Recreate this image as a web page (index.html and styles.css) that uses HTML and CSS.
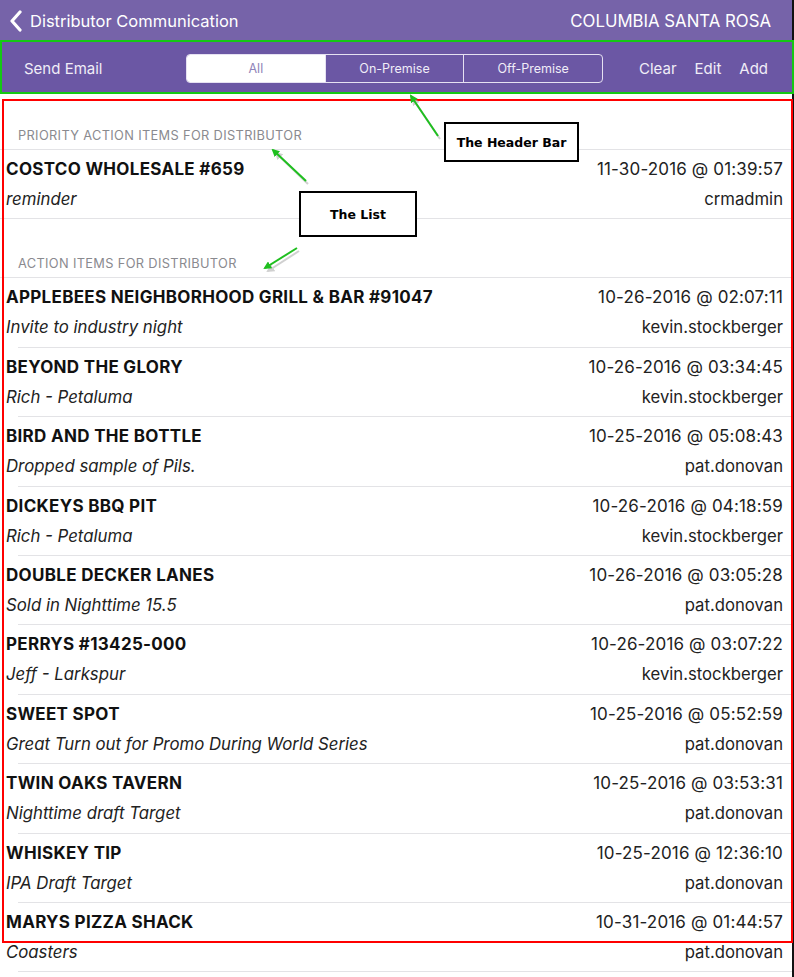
FILE: index.html
```html
<!DOCTYPE html>
<html>
<head>
<meta charset="utf-8">
<link rel="stylesheet" href="styles.css">
</head>
<body>
<div class="app">
  <header class="navbar">
    <div class="nav-left">
      <svg class="chev" width="14" height="22" viewBox="0 0 14 22"><polyline points="11,2 3,11 11,20" fill="none" stroke="#fff" stroke-width="3.2" stroke-linecap="round" stroke-linejoin="round"/></svg>
      <span class="nav-title">Distributor Communication</span>
    </div>
    <span class="nav-right">COLUMBIA SANTA ROSA</span>
  </header>
  <div class="toolbar">
    <span class="tb-btn send">Send Email</span>
    <div class="segmented">
      <span class="seg active">All</span>
      <span class="seg">On-Premise</span>
      <span class="seg">Off-Premise</span>
    </div>
    <div class="tb-actions">
      <span class="tb-btn">Clear</span>
      <span class="tb-btn">Edit</span>
      <span class="tb-btn">Add</span>
    </div>
  </div>
  <main class="list">
    <div class="section-head first">PRIORITY ACTION ITEMS FOR DISTRIBUTOR</div>
    <div class="row last">
      <div class="l"><div class="t">COSTCO WHOLESALE #659</div><div class="s">reminder</div></div>
      <div class="r"><div class="d">11-30-2016 @ 01:39:57</div><div class="u">crmadmin</div></div>
    </div>
    <div class="section-head">ACTION ITEMS FOR DISTRIBUTOR</div>
    <div class="row">
      <div class="l"><div class="t">APPLEBEES NEIGHBORHOOD GRILL &amp; BAR #91047</div><div class="s">Invite to industry night</div></div>
      <div class="r"><div class="d">10-26-2016 @ 02:07:11</div><div class="u">kevin.stockberger</div></div>
    </div>
    <div class="row">
      <div class="l"><div class="t">BEYOND THE GLORY</div><div class="s">Rich - Petaluma</div></div>
      <div class="r"><div class="d">10-26-2016 @ 03:34:45</div><div class="u">kevin.stockberger</div></div>
    </div>
    <div class="row">
      <div class="l"><div class="t">BIRD AND THE BOTTLE</div><div class="s">Dropped sample of Pils.</div></div>
      <div class="r"><div class="d">10-25-2016 @ 05:08:43</div><div class="u">pat.donovan</div></div>
    </div>
    <div class="row">
      <div class="l"><div class="t">DICKEYS BBQ PIT</div><div class="s">Rich - Petaluma</div></div>
      <div class="r"><div class="d">10-26-2016 @ 04:18:59</div><div class="u">kevin.stockberger</div></div>
    </div>
    <div class="row">
      <div class="l"><div class="t">DOUBLE DECKER LANES</div><div class="s">Sold in Nighttime 15.5</div></div>
      <div class="r"><div class="d">10-26-2016 @ 03:05:28</div><div class="u">pat.donovan</div></div>
    </div>
    <div class="row">
      <div class="l"><div class="t">PERRYS #13425-000</div><div class="s">Jeff - Larkspur</div></div>
      <div class="r"><div class="d">10-26-2016 @ 03:07:22</div><div class="u">kevin.stockberger</div></div>
    </div>
    <div class="row">
      <div class="l"><div class="t">SWEET SPOT</div><div class="s">Great Turn out for Promo During World Series</div></div>
      <div class="r"><div class="d">10-25-2016 @ 05:52:59</div><div class="u">pat.donovan</div></div>
    </div>
    <div class="row">
      <div class="l"><div class="t">TWIN OAKS TAVERN</div><div class="s">Nighttime draft Target</div></div>
      <div class="r"><div class="d">10-25-2016 @ 03:53:31</div><div class="u">pat.donovan</div></div>
    </div>
    <div class="row">
      <div class="l"><div class="t">WHISKEY TIP</div><div class="s">IPA Draft Target</div></div>
      <div class="r"><div class="d">10-25-2016 @ 12:36:10</div><div class="u">pat.donovan</div></div>
    </div>
    <div class="row">
      <div class="l"><div class="t">MARYS PIZZA SHACK</div><div class="s">Coasters</div></div>
      <div class="r"><div class="d">10-31-2016 @ 01:44:57</div><div class="u">pat.donovan</div></div>
    </div>
  </main>
</div>

<div class="annot-green"></div>
<div class="annot-red"></div>
<div class="callout callout-header">The Header Bar</div>
<div class="callout callout-list">The List</div>
<svg class="arrows" width="794" height="977" viewBox="0 0 794 977">
  <defs>
    <marker id="ah" markerWidth="8" markerHeight="8" refX="6" refY="4" orient="auto" markerUnits="userSpaceOnUse">
      <path d="M0,0 L8,4 L0,8 Z" fill="#1fbf1f"/>
    </marker>
    <marker id="ahs" markerWidth="8" markerHeight="8" refX="6" refY="4" orient="auto" markerUnits="userSpaceOnUse">
      <path d="M0,0 L8,4 L0,8 Z" fill="#bdbdbd"/>
    </marker>
  </defs>
  <g stroke="#bdbdbd" stroke-width="2" opacity="0.7">
    <line x1="440" y1="139" x2="413" y2="99" marker-end="url(#ahs)"/>
    <line x1="308" y1="184" x2="276" y2="153" marker-end="url(#ahs)"/>
    <line x1="299" y1="251" x2="268" y2="271" marker-end="url(#ahs)"/>
  </g>
  <g stroke="#1fbf1f" stroke-width="2">
    <line x1="438" y1="136" x2="411" y2="96" marker-end="url(#ah)"/>
    <line x1="306" y1="181" x2="273" y2="150" marker-end="url(#ah)"/>
    <line x1="297" y1="248" x2="265" y2="268" marker-end="url(#ah)"/>
  </g>
</svg>
</body>
</html>
```
FILE: styles.css
```css
html, body {
  margin: 0;
  padding: 0;
}
body {
  background: #111;
  width: 794px;
  height: 977px;
  overflow: hidden;
  position: relative;
  font-family: Inter, "Open Sans", "Liberation Sans", sans-serif;
}
.app {
  width: 792px;
  height: 977px;
  background: #fff;
  display: flex;
  flex-direction: column;
}
.navbar {
  height: 40px;
  background: #7663a9;
  color: #fff;
  display: flex;
  align-items: center;
  justify-content: space-between;
  padding: 1px 21px 0 9px;
  box-sizing: border-box;
  flex: none;
}
.nav-left {
  display: flex;
  align-items: center;
  gap: 7px;
}
.chev { display: block; }
.nav-title {
  font-size: 16.5px;
}
.nav-right {
  font-size: 16.8px;
}
.toolbar {
  height: 53px;
  background: #6b57a4;
  border-bottom: 1px solid #cfc6e6;
  box-sizing: border-box;
  display: flex;
  align-items: center;
  padding: 5px 0 0 24px;
  flex: none;
}
.tb-btn {
  color: #f0edf7;
  font-size: 15px;
}
.send { width: 162px; }
.segmented {
  display: flex;
  width: 417px;
  height: 29px;
  border: 1px solid #e6e1f2;
  border-radius: 4px;
  box-sizing: border-box;
  overflow: hidden;
}
.seg {
  flex: 1;
  display: flex;
  align-items: center;
  justify-content: center;
  font-size: 12.5px;
  color: #f0edf7;
  border-left: 1px solid #e6e1f2;
}
.seg:first-child { border-left: none; }
.seg.active {
  background: #fff;
  color: #8f84b9;
}
.tb-actions {
  display: flex;
  gap: 18px;
  margin-left: 36px;
}
.list {
  flex: 1;
  display: flex;
  flex-direction: column;
}
.section-head {
  height: 59px;
  box-sizing: border-box;
  display: flex;
  align-items: flex-end;
  padding: 0 0 6px 18px;
  font-size: 12.8px;
  line-height: 14px;
  color: #8a8a8f;
  letter-spacing: 0.35px;
  border-bottom: 1px solid #e3e3e6;
}
.section-head.first { height: 57px; }
.row {
  height: 69.4px;
  box-sizing: border-box;
  display: flex;
  justify-content: space-between;
  padding: 9px 9px 0 6px;
  background: linear-gradient(#e3e3e6, #e3e3e6) no-repeat 18px 100% / calc(100% - 18px) 1px;
  flex: none;
}
.row.last {
  background: linear-gradient(#e3e3e6, #e3e3e6) no-repeat 0 100% / 100% 1px;
}
.l, .r {
  display: flex;
  flex-direction: column;
  gap: 10px;
  line-height: 20px;
}
.r {
  align-items: flex-end;
  color: #222;
}
.t {
  font-weight: 700;
  font-size: 17px;
  letter-spacing: 0.3px;
  color: #111;
}
.s {
  font-style: italic;
  font-size: 16.8px;
  color: #222;
}
.d {
  font-size: 17px;
  letter-spacing: 0.15px;
}
.u {
  font-size: 16.7px;
}

/* annotation overlays */
.annot-green {
  position: absolute;
  left: 0;
  top: 40px;
  width: 794px;
  height: 54px;
  border: 2px solid #14c814;
  box-sizing: border-box;
}
.annot-red {
  position: absolute;
  left: 2px;
  top: 99px;
  width: 791px;
  height: 844px;
  border: 2px solid #ff0000;
  box-sizing: border-box;
}
.callout {
  position: absolute;
  background: #fff;
  border: 2px solid #000;
  box-sizing: border-box;
  display: flex;
  align-items: center;
  justify-content: center;
  font-family: "DejaVu Sans", sans-serif;
  font-weight: 700;
  font-size: 12.5px;
  color: #000;
}
.callout-header {
  left: 444px;
  top: 122px;
  width: 135px;
  height: 40px;
}
.callout-list {
  left: 299px;
  top: 191px;
  width: 118px;
  height: 46px;
}
.arrows {
  position: absolute;
  left: 0;
  top: 0;
  pointer-events: none;
}
```
